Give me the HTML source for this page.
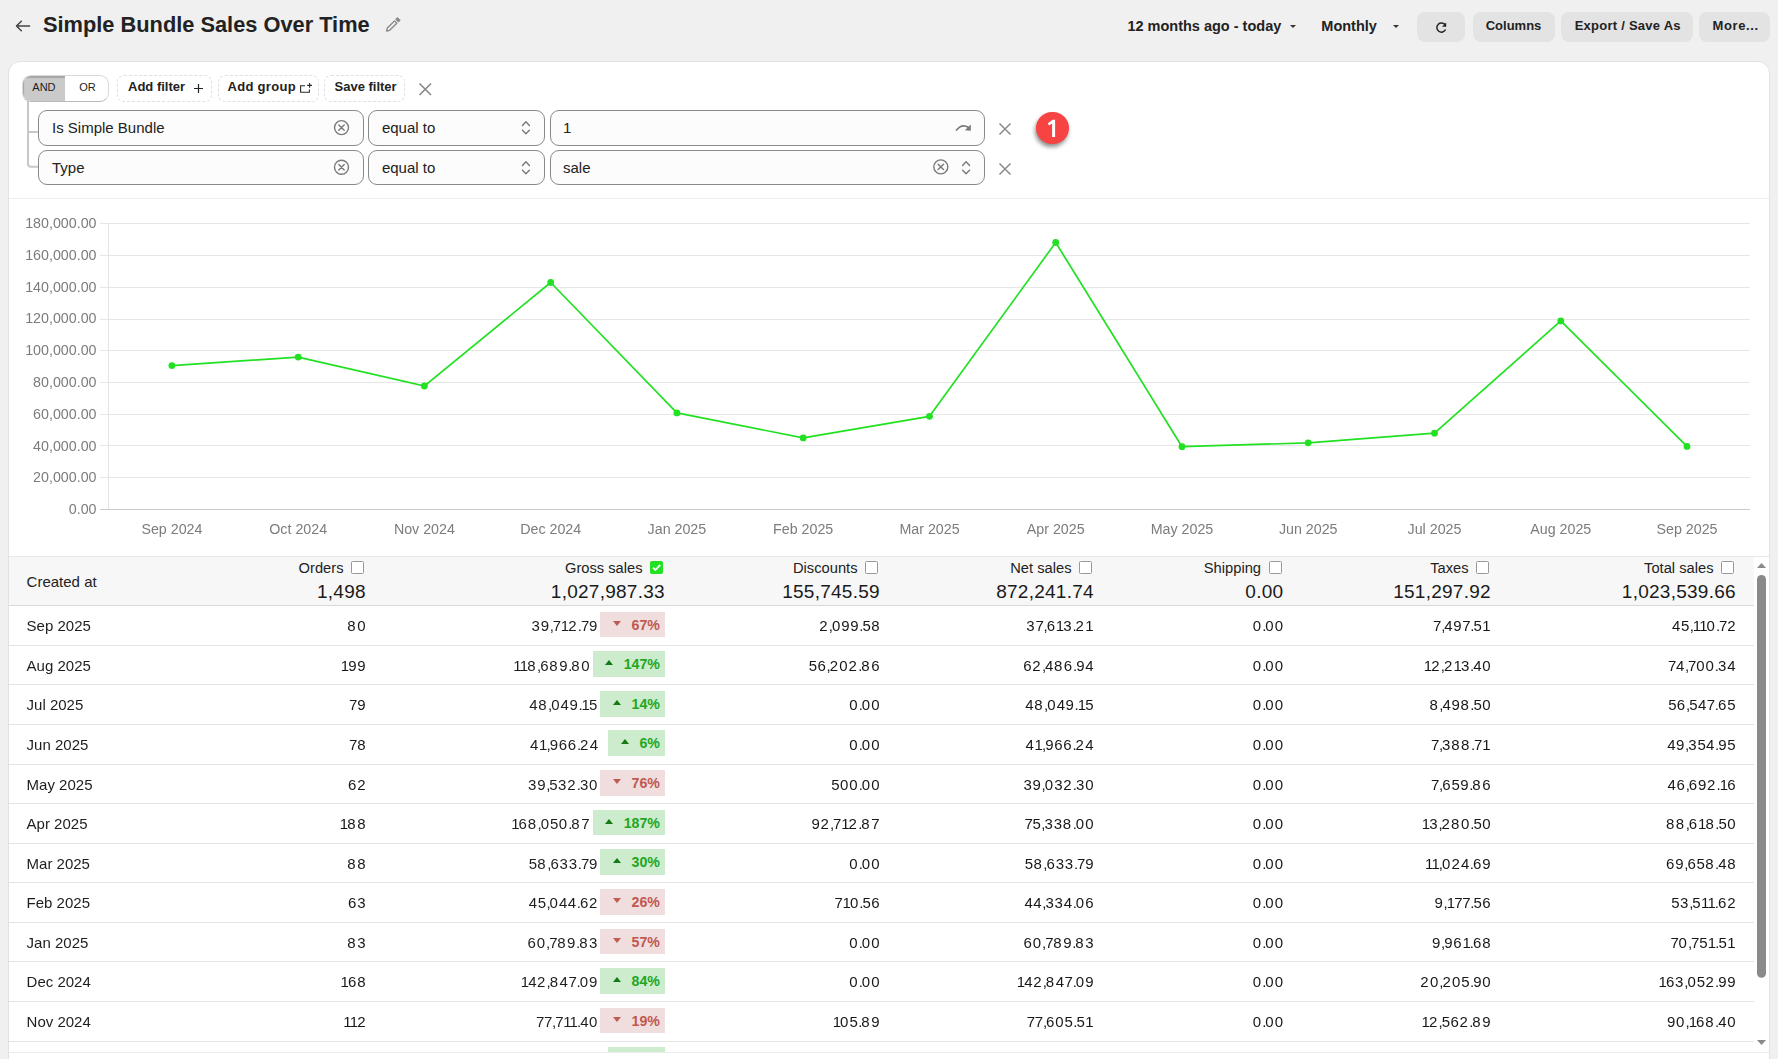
<!DOCTYPE html>
<html><head><meta charset="utf-8">
<style>
*{box-sizing:border-box}
html,body{margin:0;padding:0}
body{width:1778px;height:1059px;overflow:hidden;position:relative;background:#f0f0f0;font-family:"Liberation Sans",sans-serif;color:#1e1e1e}
.a{position:absolute}
.t{position:absolute;white-space:nowrap;line-height:1}
.date{font-size:15px}
.num{font-size:15px;text-align:right;color:#181818}
s{text-decoration:none} s.q0{letter-spacing:1px} s.q1{letter-spacing:-.9px} s.q2{letter-spacing:1.2px} s.q3{letter-spacing:.8px} s.q4{letter-spacing:.55px} s.q5{letter-spacing:.35px} s.q6{letter-spacing:.8px} s.q7{letter-spacing:-.3px} s.q8{letter-spacing:1.5px} s.q9{letter-spacing:.65px} s.qp{letter-spacing:-1px}
.btn{position:absolute;background:#e3e3e3;border-radius:8px;top:12px;height:30px}
.btxt{position:absolute;font-size:13px;font-weight:bold;line-height:13px;top:19.4px;white-space:nowrap;color:#222}
.card{position:absolute;left:8px;top:61px;width:1762px;height:1100px;background:#fff;border:1px solid #e2e2e2;border-radius:12px}
.dash{position:absolute;top:75px;height:27px;border:1px dashed #e0e0e0;border-radius:7px}
.dtxt{position:absolute;font-size:13px;font-weight:bold;line-height:13px;top:80px;white-space:nowrap;color:#222}
.inp{position:absolute;height:35px;border:1px solid #8a8a8a;border-radius:9px;background:#fcfcfc}
.itxt{position:absolute;font-size:15px;line-height:15px;white-space:nowrap;color:#222}
.rowline{position:absolute;left:9px;width:1745px;height:1px;background:#e4e4e4}
.badge{position:absolute;height:25px;font-size:14.2px;font-weight:bold;line-height:26.3px;padding:0 5px 0 31.2px;white-space:nowrap}
.badge i{position:absolute;left:12.8px;top:9px;width:0;height:0;border-left:4.5px solid transparent;border-right:4.5px solid transparent}
.badge.u{background:#cdeccd;color:#22a622}
.badge.u i{border-bottom:5px solid #137a13}
.badge.d{background:#f0dede;color:#c05850}
.badge.d i{border-top:5px solid #c05a55;top:9px}
.gross{position:absolute;right:max(calc(100% + 3px), 67px);font-size:15px;font-weight:normal;line-height:1;white-space:nowrap;text-align:right;color:#1e1e1e}
.hlab{position:absolute;font-size:14.7px;line-height:1;white-space:nowrap;color:#222}
.htot{position:absolute;font-size:19px;letter-spacing:.25px;line-height:1;white-space:nowrap;text-align:right;color:#1a1a1a}
.cb{position:absolute;top:561px;width:13px;height:13px;border:1px solid #999;border-radius:1.5px;background:#fff}
</style></head><body>

<!-- header -->
<svg class="a" style="left:0;top:0" width="60" height="50" viewBox="0 0 60 50">
 <path d="M29.6 26H16.6M21.3 21.3L16.5 26L21.3 30.7" fill="none" stroke="#444" stroke-width="1.5" stroke-linecap="round" stroke-linejoin="round"/>
</svg>
<div class="t" style="left:43px;top:14.45px;font-size:21.8px;font-weight:bold;color:#222">Simple Bundle Sales Over Time</div>
<svg class="a" style="left:380px;top:12px" width="26" height="26" viewBox="380 12 26 26">
 <g transform="translate(386.5 31.2) rotate(-45)">
  <path d="M0.3 0 L2.8 -1.6 H13 V1.6 H2.8 Z" fill="none" stroke="#888" stroke-width="1.4" stroke-linejoin="round"/>
  <rect x="14.6" y="-2.3" width="3.2" height="4.6" fill="#888"/>
 </g>
</svg>

<div class="t" style="left:1127.4px;top:18.93px;font-size:14.5px;font-weight:bold;color:#222">12 months ago - today</div>
<svg class="a" style="left:1288px;top:22px" width="10" height="8"><path d="M2 3H8L5 6Z" fill="#333"/></svg>
<div class="t" style="left:1321.3px;top:18.93px;font-size:14.5px;font-weight:bold;color:#222">Monthly</div>
<svg class="a" style="left:1391px;top:22px" width="10" height="8"><path d="M2 3H8L5 6Z" fill="#333"/></svg>

<div class="btn" style="left:1417px;width:48px"></div>
<svg class="a" style="left:1431px;top:17px" width="20" height="20" viewBox="1431 17 20 20">
 <path d="M1445.3 25.0 A4.6 4.6 0 1 0 1445.6 29.5" fill="none" stroke="#222" stroke-width="1.5"/>
 <path d="M1446.2 22.6 L1446.2 26.8 L1442.0 26.8 Z" fill="#222"/>
</svg>
<div class="btn" style="left:1472.5px;width:82.5px"></div>
<div class="btxt" style="left:1485.7px">Columns</div>
<div class="btn" style="left:1561px;width:132px"></div>
<div class="btxt" style="left:1574.7px;letter-spacing:.25px">Export / Save As</div>
<div class="btn" style="left:1699px;width:71px"></div>
<div class="btxt" style="left:1712.5px;letter-spacing:.6px">More...</div>

<!-- card -->
<div class="card"></div>

<!-- filter toolbar -->
<div class="a" style="left:22px;top:75px;width:86.5px;height:26.5px;border:1px solid #d8d8d8;border-bottom-color:#b9b9b9;border-radius:9px;background:#fff;overflow:hidden">
 <div class="a" style="left:0;top:0;width:42px;height:100%;background:#cacaca;box-shadow:inset 1px 2px 1px rgba(0,0,0,0.18)"></div>
</div>
<div class="t" style="left:32.3px;top:81.89px;font-size:11px;color:#222">AND</div>
<div class="t" style="left:79.3px;top:81.89px;font-size:11px;color:#222">OR</div>

<div class="dash" style="left:117.3px;width:95px"></div>
<div class="dtxt" style="left:128px">Add filter</div>
<svg class="a" style="left:190px;top:80px" width="18" height="18" viewBox="190 80 18 18"><path d="M194 88.5H203M198.5 84V93" stroke="#222" stroke-width="1.2"/></svg>
<div class="dash" style="left:217.5px;width:101.5px"></div>
<div class="dtxt" style="left:227.5px;letter-spacing:.3px">Add group</div>
<svg class="a" style="left:296px;top:80px" width="18" height="16" viewBox="296 80 18 16"><path d="M305 85.8H300.6V92.2H309.4V89.6" fill="none" stroke="#2a2a2a" stroke-width="1.1"/><path d="M307.2 85.4H312M309.6 83V87.8" stroke="#2a2a2a" stroke-width="1.1"/></svg>
<div class="dash" style="left:324.4px;width:80.7px"></div>
<div class="dtxt" style="left:334.5px">Save filter</div>
<svg class="a" style="left:414px;top:78px" width="22" height="22" viewBox="414 78 22 22"><path d="M419.5 83.5L431 95M431 83.5L419.5 95" stroke="#888" stroke-width="1.6"/></svg>

<!-- tree connector -->
<svg class="a" style="left:20px;top:100px" width="24" height="80" viewBox="20 100 24 80">
 <path d="M28 101V163.8Q28 166.8 31 166.8H38.5M28 132H38.5" fill="none" stroke="#c8c8c8" stroke-width="2"/>
</svg>

<!-- filter rows -->
<div class="inp" style="left:38px;top:110px;width:326px;height:36px"></div>
<div class="itxt" style="left:52px;top:120.10px">Is Simple Bundle</div>
<div class="inp" style="left:368px;top:110px;width:177px;height:36px"></div>
<div class="itxt" style="left:381.9px;top:120.10px">equal to</div>
<div class="inp" style="left:550px;top:110px;width:435px;height:36px"></div>
<div class="itxt" style="left:563px;top:120.10px">1</div>

<div class="inp" style="left:38px;top:150px;width:326px"></div>
<div class="itxt" style="left:52px;top:159.90px">Type</div>
<div class="inp" style="left:368px;top:150px;width:177px"></div>
<div class="itxt" style="left:381.9px;top:159.90px">equal to</div>
<div class="inp" style="left:550px;top:150px;width:435px"></div>
<div class="itxt" style="left:563px;top:159.90px">sale</div>

<svg class="a" style="left:0;top:100px" width="1100" height="90" viewBox="0 100 1100 90">
 <g fill="none" stroke="#7a7a7a" stroke-width="1.4" stroke-linecap="round" stroke-linejoin="round">
  <circle cx="341.5" cy="127.6" r="7"/><path d="M338.8 124.9L344.2 130.3M344.2 124.9L338.8 130.3"/>
  <circle cx="341.5" cy="167.2" r="7"/><path d="M338.8 164.5L344.2 169.9M344.2 164.5L338.8 169.9"/>
  <path d="M522.5 125.4L525.9 121.8L529.4 125.4M522.5 130.2L525.9 133.8L529.4 130.2"/>
  <path d="M522.5 165.4L525.9 161.8L529.4 165.4M522.5 170.2L525.9 173.8L529.4 170.2"/>
  <circle cx="940.8" cy="166.9" r="7"/><path d="M938.1 164.2L943.5 169.6M943.5 164.2L938.1 169.6"/>
  <path d="M962.6 165.4L966.1 161.8L969.6 165.4M962.6 170.2L966.1 173.8L969.6 170.2"/>
 </g>
 <path d="M956 130.6 Q962 123 968.5 127.5" fill="none" stroke="#7a7a7a" stroke-width="1.6"/>
 <path d="M970.8 124.6 L970.8 130.8 L964.8 130.2 Z" fill="#7a7a7a"/>
 <path d="M999.5 123.5L1010.5 134.5M1010.5 123.5L999.5 134.5M999.5 163.5L1010.5 174.5M1010.5 163.5L999.5 174.5" stroke="#8a8a8a" stroke-width="1.5"/>
</svg>
<div class="a" style="left:1036.2px;top:111.6px;width:32.8px;height:32.8px;border-radius:50%;background:#f84343;box-shadow:-1px 3px 4px rgba(0,0,0,0.45)"></div>
<svg class="a" style="left:1040px;top:114px" width="26" height="26" viewBox="1040 114 26 26"><path d="M1052.1 136.9H1055.1V119.7H1052.6L1047.9 123.3L1048.9 125.6L1052.1 123.4Z" fill="#fff"/></svg>
<div class="a" style="left:9px;top:198px;width:1760px;height:1px;background:#efefef"></div>

<!-- chart -->
<svg width="1778" height="1059" viewBox="0 0 1778 1059" style="position:absolute;left:0;top:0;will-change:transform">
<g font-family="Liberation Sans" font-size="14.25" fill="#7c7c7c">
<line x1="100" y1="509.5" x2="1750" y2="509.5" stroke="#cccccc" stroke-width="1"/>
<text x="96.5" y="514.1" text-anchor="end">0.00</text>
<line x1="100" y1="477.5" x2="1750" y2="477.5" stroke="#e6e6e6" stroke-width="1"/>
<text x="96.5" y="482.3" text-anchor="end">20,000.00</text>
<line x1="100" y1="445.5" x2="1750" y2="445.5" stroke="#e6e6e6" stroke-width="1"/>
<text x="96.5" y="450.5" text-anchor="end">40,000.00</text>
<line x1="100" y1="414.5" x2="1750" y2="414.5" stroke="#e6e6e6" stroke-width="1"/>
<text x="96.5" y="418.8" text-anchor="end">60,000.00</text>
<line x1="100" y1="382.5" x2="1750" y2="382.5" stroke="#e6e6e6" stroke-width="1"/>
<text x="96.5" y="387.0" text-anchor="end">80,000.00</text>
<line x1="100" y1="350.5" x2="1750" y2="350.5" stroke="#e6e6e6" stroke-width="1"/>
<text x="96.5" y="355.2" text-anchor="end">100,000.00</text>
<line x1="100" y1="319.5" x2="1750" y2="319.5" stroke="#e6e6e6" stroke-width="1"/>
<text x="96.5" y="323.4" text-anchor="end">120,000.00</text>
<line x1="100" y1="287.5" x2="1750" y2="287.5" stroke="#e6e6e6" stroke-width="1"/>
<text x="96.5" y="291.7" text-anchor="end">140,000.00</text>
<line x1="100" y1="255.5" x2="1750" y2="255.5" stroke="#e6e6e6" stroke-width="1"/>
<text x="96.5" y="259.9" text-anchor="end">160,000.00</text>
<line x1="100" y1="223.5" x2="1750" y2="223.5" stroke="#e6e6e6" stroke-width="1"/>
<text x="96.5" y="228.1" text-anchor="end">180,000.00</text>
<line x1="108.5" y1="223" x2="108.5" y2="509" stroke="#e3e3e3" stroke-width="1"/>
<text x="171.9" y="533.8" text-anchor="middle">Sep 2024</text>
<text x="298.2" y="533.8" text-anchor="middle">Oct 2024</text>
<text x="424.4" y="533.8" text-anchor="middle">Nov 2024</text>
<text x="550.7" y="533.8" text-anchor="middle">Dec 2024</text>
<text x="676.9" y="533.8" text-anchor="middle">Jan 2025</text>
<text x="803.2" y="533.8" text-anchor="middle">Feb 2025</text>
<text x="929.5" y="533.8" text-anchor="middle">Mar 2025</text>
<text x="1055.7" y="533.8" text-anchor="middle">Apr 2025</text>
<text x="1182.0" y="533.8" text-anchor="middle">May 2025</text>
<text x="1308.2" y="533.8" text-anchor="middle">Jun 2025</text>
<text x="1434.5" y="533.8" text-anchor="middle">Jul 2025</text>
<text x="1560.8" y="533.8" text-anchor="middle">Aug 2025</text>
<text x="1687.0" y="533.8" text-anchor="middle">Sep 2025</text>
</g>
<polyline fill="none" stroke="#22e022" stroke-width="1.7" stroke-linejoin="round" points="171.9,365.6 298.2,357.1 424.4,386.0 550.7,282.5 676.9,412.9 803.2,437.9 929.5,416.3 1055.7,242.5 1182.0,446.7 1308.2,442.8 1434.5,433.2 1560.8,320.9 1687.0,446.4"/>
<circle cx="171.9" cy="365.6" r="3.4" fill="#22e022"/>
<circle cx="298.2" cy="357.1" r="3.4" fill="#22e022"/>
<circle cx="424.4" cy="386.0" r="3.4" fill="#22e022"/>
<circle cx="550.7" cy="282.5" r="3.4" fill="#22e022"/>
<circle cx="676.9" cy="412.9" r="3.4" fill="#22e022"/>
<circle cx="803.2" cy="437.9" r="3.4" fill="#22e022"/>
<circle cx="929.5" cy="416.3" r="3.4" fill="#22e022"/>
<circle cx="1055.7" cy="242.5" r="3.4" fill="#22e022"/>
<circle cx="1182.0" cy="446.7" r="3.4" fill="#22e022"/>
<circle cx="1308.2" cy="442.8" r="3.4" fill="#22e022"/>
<circle cx="1434.5" cy="433.2" r="3.4" fill="#22e022"/>
<circle cx="1560.8" cy="320.9" r="3.4" fill="#22e022"/>
<circle cx="1687.0" cy="446.4" r="3.4" fill="#22e022"/>
</svg>

<!-- table -->
<div class="a" style="left:9px;top:556px;width:1760px;height:1px;background:#e8e8e8"></div>
<div class="a" style="left:9px;top:557px;width:1745px;height:48.5px;background:#f7f7f7"></div>
<div class="a" style="left:9px;top:605px;width:1745px;height:1px;background:#d9d9d9"></div>
<div class="hlab" style="left:26.6px;top:574.00px;font-size:15px">Created at</div>
<div class="cb" style="left:351.0px"></div>
<div class="hlab" style="right:1434.5px;top:560.56px">Orders</div>
<div class="htot" style="right:1412.2px;top:581.62px">1,498</div>
<div class="cb" style="left:650.0px;background:#22e022;border-color:#22e022"></div>
<svg class="a" style="left:650.0px;top:561px" width="13" height="13" viewBox="0 0 13 13"><path d="M3 6.6L5.4 9L10.2 3.8" fill="none" stroke="#fff" stroke-width="1.8"/></svg>
<div class="hlab" style="right:1135.5px;top:560.56px">Gross sales</div>
<div class="htot" style="right:1113.2px;top:581.62px">1,027,987.33</div>
<div class="cb" style="left:865.0px"></div>
<div class="hlab" style="right:920.5px;top:560.56px">Discounts</div>
<div class="htot" style="right:898.2px;top:581.62px">155,745.59</div>
<div class="cb" style="left:1079.0px"></div>
<div class="hlab" style="right:706.5px;top:560.56px">Net sales</div>
<div class="htot" style="right:684.2px;top:581.62px">872,241.74</div>
<div class="cb" style="left:1268.5px"></div>
<div class="hlab" style="right:517.0px;top:560.56px">Shipping</div>
<div class="htot" style="right:494.7px;top:581.62px">0.00</div>
<div class="cb" style="left:1476.0px"></div>
<div class="hlab" style="right:309.5px;top:560.56px">Taxes</div>
<div class="htot" style="right:287.2px;top:581.62px">151,297.92</div>
<div class="cb" style="left:1721.0px"></div>
<div class="hlab" style="right:64.5px;top:560.56px">Total sales</div>
<div class="htot" style="right:42.2px;top:581.62px">1,023,539.66</div>
<div class="a" style="left:0;top:0;width:1778px;height:1052px;overflow:hidden">
<div class="rowline" style="top:645px"></div>
<div class="t date" style="left:26.6px;top:618.30px">Sep 2025</div>
<div class="t num" style="right:1412.5px;top:618.30px"><s class="q8">8</s>0</div>
<div class="badge d" style="right:1113px;top:612px;height:25px"><i></i>67%<span class="gross" style="top:6.30px"><s class="q3">3</s><s class="q9">9</s><s class="qp">,</s><s class="q7">7</s><s class="q1">1</s><s class="q2">2</s><s class="qp">.</s><s class="q7">7</s>9</span></div>
<div class="t num" style="right:898.5px;top:618.30px"><s class="q2">2</s><s class="qp">,</s><s class="q0">0</s><s class="q9">9</s><s class="q9">9</s><s class="qp">.</s><s class="q5">5</s>8</div>
<div class="t num" style="right:684.5px;top:618.30px"><s class="q3">3</s><s class="q7">7</s><s class="qp">,</s><s class="q6">6</s><s class="q1">1</s><s class="q3">3</s><s class="qp">.</s><s class="q2">2</s>1</div>
<div class="t num" style="right:495px;top:618.30px"><s class="q0">0</s><s class="qp">.</s><s class="q0">0</s>0</div>
<div class="t num" style="right:287.5px;top:618.30px"><s class="q7">7</s><s class="qp">,</s><s class="q4">4</s><s class="q9">9</s><s class="q7">7</s><s class="qp">.</s><s class="q5">5</s>1</div>
<div class="t num" style="right:42.5px;top:618.30px"><s class="q4">4</s><s class="q5">5</s><s class="qp">,</s><s class="q1">1</s><s class="q1">1</s><s class="q0">0</s><s class="qp">.</s><s class="q7">7</s>2</div>
<div class="rowline" style="top:684px"></div>
<div class="t date" style="left:26.6px;top:658.30px">Aug 2025</div>
<div class="t num" style="right:1412.5px;top:658.30px"><s class="q1">1</s><s class="q9">9</s>9</div>
<div class="badge u" style="right:1113px;top:651px;height:26px"><i></i>147%<span class="gross" style="top:7.30px"><s class="q1">1</s><s class="q1">1</s><s class="q8">8</s><s class="qp">,</s><s class="q6">6</s><s class="q8">8</s><s class="q9">9</s><s class="qp">.</s><s class="q8">8</s>0</span></div>
<div class="t num" style="right:898.5px;top:658.30px"><s class="q5">5</s><s class="q6">6</s><s class="qp">,</s><s class="q2">2</s><s class="q0">0</s><s class="q2">2</s><s class="qp">.</s><s class="q8">8</s>6</div>
<div class="t num" style="right:684.5px;top:658.30px"><s class="q6">6</s><s class="q2">2</s><s class="qp">,</s><s class="q4">4</s><s class="q8">8</s><s class="q6">6</s><s class="qp">.</s><s class="q9">9</s>4</div>
<div class="t num" style="right:495px;top:658.30px"><s class="q0">0</s><s class="qp">.</s><s class="q0">0</s>0</div>
<div class="t num" style="right:287.5px;top:658.30px"><s class="q1">1</s><s class="q2">2</s><s class="qp">,</s><s class="q2">2</s><s class="q1">1</s><s class="q3">3</s><s class="qp">.</s><s class="q4">4</s>0</div>
<div class="t num" style="right:42.5px;top:658.30px"><s class="q7">7</s><s class="q4">4</s><s class="qp">,</s><s class="q7">7</s><s class="q0">0</s><s class="q0">0</s><s class="qp">.</s><s class="q3">3</s>4</div>
<div class="rowline" style="top:724px"></div>
<div class="t date" style="left:26.6px;top:697.30px">Jul 2025</div>
<div class="t num" style="right:1412.5px;top:697.30px"><s class="q7">7</s>9</div>
<div class="badge u" style="right:1113px;top:691px;height:26px"><i></i>14%<span class="gross" style="top:6.30px"><s class="q4">4</s><s class="q8">8</s><s class="qp">,</s><s class="q0">0</s><s class="q4">4</s><s class="q9">9</s><s class="qp">.</s><s class="q1">1</s>5</span></div>
<div class="t num" style="right:898.5px;top:697.30px"><s class="q0">0</s><s class="qp">.</s><s class="q0">0</s>0</div>
<div class="t num" style="right:684.5px;top:697.30px"><s class="q4">4</s><s class="q8">8</s><s class="qp">,</s><s class="q0">0</s><s class="q4">4</s><s class="q9">9</s><s class="qp">.</s><s class="q1">1</s>5</div>
<div class="t num" style="right:495px;top:697.30px"><s class="q0">0</s><s class="qp">.</s><s class="q0">0</s>0</div>
<div class="t num" style="right:287.5px;top:697.30px"><s class="q8">8</s><s class="qp">,</s><s class="q4">4</s><s class="q9">9</s><s class="q8">8</s><s class="qp">.</s><s class="q5">5</s>0</div>
<div class="t num" style="right:42.5px;top:697.30px"><s class="q5">5</s><s class="q6">6</s><s class="qp">,</s><s class="q5">5</s><s class="q4">4</s><s class="q7">7</s><s class="qp">.</s><s class="q6">6</s>5</div>
<div class="rowline" style="top:764px"></div>
<div class="t date" style="left:26.6px;top:737.30px">Jun 2025</div>
<div class="t num" style="right:1412.5px;top:737.30px"><s class="q7">7</s>8</div>
<div class="badge u" style="right:1113px;top:730px;height:26px"><i></i>6%<span class="gross" style="top:7.30px"><s class="q4">4</s><s class="q1">1</s><s class="qp">,</s><s class="q9">9</s><s class="q6">6</s><s class="q6">6</s><s class="qp">.</s><s class="q2">2</s>4</span></div>
<div class="t num" style="right:898.5px;top:737.30px"><s class="q0">0</s><s class="qp">.</s><s class="q0">0</s>0</div>
<div class="t num" style="right:684.5px;top:737.30px"><s class="q4">4</s><s class="q1">1</s><s class="qp">,</s><s class="q9">9</s><s class="q6">6</s><s class="q6">6</s><s class="qp">.</s><s class="q2">2</s>4</div>
<div class="t num" style="right:495px;top:737.30px"><s class="q0">0</s><s class="qp">.</s><s class="q0">0</s>0</div>
<div class="t num" style="right:287.5px;top:737.30px"><s class="q7">7</s><s class="qp">,</s><s class="q3">3</s><s class="q8">8</s><s class="q8">8</s><s class="qp">.</s><s class="q7">7</s>1</div>
<div class="t num" style="right:42.5px;top:737.30px"><s class="q4">4</s><s class="q9">9</s><s class="qp">,</s><s class="q3">3</s><s class="q5">5</s><s class="q4">4</s><s class="qp">.</s><s class="q9">9</s>5</div>
<div class="rowline" style="top:803px"></div>
<div class="t date" style="left:26.6px;top:777.30px">May 2025</div>
<div class="t num" style="right:1412.5px;top:777.30px"><s class="q6">6</s>2</div>
<div class="badge d" style="right:1113px;top:770px;height:26px"><i></i>76%<span class="gross" style="top:7.30px"><s class="q3">3</s><s class="q9">9</s><s class="qp">,</s><s class="q5">5</s><s class="q3">3</s><s class="q2">2</s><s class="qp">.</s><s class="q3">3</s>0</span></div>
<div class="t num" style="right:898.5px;top:777.30px"><s class="q5">5</s><s class="q0">0</s><s class="q0">0</s><s class="qp">.</s><s class="q0">0</s>0</div>
<div class="t num" style="right:684.5px;top:777.30px"><s class="q3">3</s><s class="q9">9</s><s class="qp">,</s><s class="q0">0</s><s class="q3">3</s><s class="q2">2</s><s class="qp">.</s><s class="q3">3</s>0</div>
<div class="t num" style="right:495px;top:777.30px"><s class="q0">0</s><s class="qp">.</s><s class="q0">0</s>0</div>
<div class="t num" style="right:287.5px;top:777.30px"><s class="q7">7</s><s class="qp">,</s><s class="q6">6</s><s class="q5">5</s><s class="q9">9</s><s class="qp">.</s><s class="q8">8</s>6</div>
<div class="t num" style="right:42.5px;top:777.30px"><s class="q4">4</s><s class="q6">6</s><s class="qp">,</s><s class="q6">6</s><s class="q9">9</s><s class="q2">2</s><s class="qp">.</s><s class="q1">1</s>6</div>
<div class="rowline" style="top:843px"></div>
<div class="t date" style="left:26.6px;top:816.30px">Apr 2025</div>
<div class="t num" style="right:1412.5px;top:816.30px"><s class="q1">1</s><s class="q8">8</s>8</div>
<div class="badge u" style="right:1113px;top:810px;height:25px"><i></i>187%<span class="gross" style="top:6.30px"><s class="q1">1</s><s class="q6">6</s><s class="q8">8</s><s class="qp">,</s><s class="q0">0</s><s class="q5">5</s><s class="q0">0</s><s class="qp">.</s><s class="q8">8</s>7</span></div>
<div class="t num" style="right:898.5px;top:816.30px"><s class="q9">9</s><s class="q2">2</s><s class="qp">,</s><s class="q7">7</s><s class="q1">1</s><s class="q2">2</s><s class="qp">.</s><s class="q8">8</s>7</div>
<div class="t num" style="right:684.5px;top:816.30px"><s class="q7">7</s><s class="q5">5</s><s class="qp">,</s><s class="q3">3</s><s class="q3">3</s><s class="q8">8</s><s class="qp">.</s><s class="q0">0</s>0</div>
<div class="t num" style="right:495px;top:816.30px"><s class="q0">0</s><s class="qp">.</s><s class="q0">0</s>0</div>
<div class="t num" style="right:287.5px;top:816.30px"><s class="q1">1</s><s class="q3">3</s><s class="qp">,</s><s class="q2">2</s><s class="q8">8</s><s class="q0">0</s><s class="qp">.</s><s class="q5">5</s>0</div>
<div class="t num" style="right:42.5px;top:816.30px"><s class="q8">8</s><s class="q8">8</s><s class="qp">,</s><s class="q6">6</s><s class="q1">1</s><s class="q8">8</s><s class="qp">.</s><s class="q5">5</s>0</div>
<div class="rowline" style="top:882px"></div>
<div class="t date" style="left:26.6px;top:856.30px">Mar 2025</div>
<div class="t num" style="right:1412.5px;top:856.30px"><s class="q8">8</s>8</div>
<div class="badge u" style="right:1113px;top:849px;height:26px"><i></i>30%<span class="gross" style="top:7.30px"><s class="q5">5</s><s class="q8">8</s><s class="qp">,</s><s class="q6">6</s><s class="q3">3</s><s class="q3">3</s><s class="qp">.</s><s class="q7">7</s>9</span></div>
<div class="t num" style="right:898.5px;top:856.30px"><s class="q0">0</s><s class="qp">.</s><s class="q0">0</s>0</div>
<div class="t num" style="right:684.5px;top:856.30px"><s class="q5">5</s><s class="q8">8</s><s class="qp">,</s><s class="q6">6</s><s class="q3">3</s><s class="q3">3</s><s class="qp">.</s><s class="q7">7</s>9</div>
<div class="t num" style="right:495px;top:856.30px"><s class="q0">0</s><s class="qp">.</s><s class="q0">0</s>0</div>
<div class="t num" style="right:287.5px;top:856.30px"><s class="q1">1</s><s class="q1">1</s><s class="qp">,</s><s class="q0">0</s><s class="q2">2</s><s class="q4">4</s><s class="qp">.</s><s class="q6">6</s>9</div>
<div class="t num" style="right:42.5px;top:856.30px"><s class="q6">6</s><s class="q9">9</s><s class="qp">,</s><s class="q6">6</s><s class="q5">5</s><s class="q8">8</s><s class="qp">.</s><s class="q4">4</s>8</div>
<div class="rowline" style="top:922px"></div>
<div class="t date" style="left:26.6px;top:895.30px">Feb 2025</div>
<div class="t num" style="right:1412.5px;top:895.30px"><s class="q6">6</s>3</div>
<div class="badge d" style="right:1113px;top:889px;height:26px"><i></i>26%<span class="gross" style="top:6.30px"><s class="q4">4</s><s class="q5">5</s><s class="qp">,</s><s class="q0">0</s><s class="q4">4</s><s class="q4">4</s><s class="qp">.</s><s class="q6">6</s>2</span></div>
<div class="t num" style="right:898.5px;top:895.30px"><s class="q7">7</s><s class="q1">1</s><s class="q0">0</s><s class="qp">.</s><s class="q5">5</s>6</div>
<div class="t num" style="right:684.5px;top:895.30px"><s class="q4">4</s><s class="q4">4</s><s class="qp">,</s><s class="q3">3</s><s class="q3">3</s><s class="q4">4</s><s class="qp">.</s><s class="q0">0</s>6</div>
<div class="t num" style="right:495px;top:895.30px"><s class="q0">0</s><s class="qp">.</s><s class="q0">0</s>0</div>
<div class="t num" style="right:287.5px;top:895.30px"><s class="q9">9</s><s class="qp">,</s><s class="q1">1</s><s class="q7">7</s><s class="q7">7</s><s class="qp">.</s><s class="q5">5</s>6</div>
<div class="t num" style="right:42.5px;top:895.30px"><s class="q5">5</s><s class="q3">3</s><s class="qp">,</s><s class="q5">5</s><s class="q1">1</s><s class="q1">1</s><s class="qp">.</s><s class="q6">6</s>2</div>
<div class="rowline" style="top:961px"></div>
<div class="t date" style="left:26.6px;top:935.30px">Jan 2025</div>
<div class="t num" style="right:1412.5px;top:935.30px"><s class="q8">8</s>3</div>
<div class="badge d" style="right:1113px;top:929px;height:25px"><i></i>57%<span class="gross" style="top:6.30px"><s class="q6">6</s><s class="q0">0</s><s class="qp">,</s><s class="q7">7</s><s class="q8">8</s><s class="q9">9</s><s class="qp">.</s><s class="q8">8</s>3</span></div>
<div class="t num" style="right:898.5px;top:935.30px"><s class="q0">0</s><s class="qp">.</s><s class="q0">0</s>0</div>
<div class="t num" style="right:684.5px;top:935.30px"><s class="q6">6</s><s class="q0">0</s><s class="qp">,</s><s class="q7">7</s><s class="q8">8</s><s class="q9">9</s><s class="qp">.</s><s class="q8">8</s>3</div>
<div class="t num" style="right:495px;top:935.30px"><s class="q0">0</s><s class="qp">.</s><s class="q0">0</s>0</div>
<div class="t num" style="right:287.5px;top:935.30px"><s class="q9">9</s><s class="qp">,</s><s class="q9">9</s><s class="q6">6</s><s class="q1">1</s><s class="qp">.</s><s class="q6">6</s>8</div>
<div class="t num" style="right:42.5px;top:935.30px"><s class="q7">7</s><s class="q0">0</s><s class="qp">,</s><s class="q7">7</s><s class="q5">5</s><s class="q1">1</s><s class="qp">.</s><s class="q5">5</s>1</div>
<div class="rowline" style="top:1001px"></div>
<div class="t date" style="left:26.6px;top:974.30px">Dec 2024</div>
<div class="t num" style="right:1412.5px;top:974.30px"><s class="q1">1</s><s class="q6">6</s>8</div>
<div class="badge u" style="right:1113px;top:968px;height:26px"><i></i>84%<span class="gross" style="top:6.30px"><s class="q1">1</s><s class="q4">4</s><s class="q2">2</s><s class="qp">,</s><s class="q8">8</s><s class="q4">4</s><s class="q7">7</s><s class="qp">.</s><s class="q0">0</s>9</span></div>
<div class="t num" style="right:898.5px;top:974.30px"><s class="q0">0</s><s class="qp">.</s><s class="q0">0</s>0</div>
<div class="t num" style="right:684.5px;top:974.30px"><s class="q1">1</s><s class="q4">4</s><s class="q2">2</s><s class="qp">,</s><s class="q8">8</s><s class="q4">4</s><s class="q7">7</s><s class="qp">.</s><s class="q0">0</s>9</div>
<div class="t num" style="right:495px;top:974.30px"><s class="q0">0</s><s class="qp">.</s><s class="q0">0</s>0</div>
<div class="t num" style="right:287.5px;top:974.30px"><s class="q2">2</s><s class="q0">0</s><s class="qp">,</s><s class="q2">2</s><s class="q0">0</s><s class="q5">5</s><s class="qp">.</s><s class="q9">9</s>0</div>
<div class="t num" style="right:42.5px;top:974.30px"><s class="q1">1</s><s class="q6">6</s><s class="q3">3</s><s class="qp">,</s><s class="q0">0</s><s class="q5">5</s><s class="q2">2</s><s class="qp">.</s><s class="q9">9</s>9</div>
<div class="rowline" style="top:1041px"></div>
<div class="t date" style="left:26.6px;top:1014.30px">Nov 2024</div>
<div class="t num" style="right:1412.5px;top:1014.30px"><s class="q1">1</s><s class="q1">1</s>2</div>
<div class="badge d" style="right:1113px;top:1008px;height:25px"><i></i>19%<span class="gross" style="top:6.30px"><s class="q7">7</s><s class="q7">7</s><s class="qp">,</s><s class="q7">7</s><s class="q1">1</s><s class="q1">1</s><s class="qp">.</s><s class="q4">4</s>0</span></div>
<div class="t num" style="right:898.5px;top:1014.30px"><s class="q1">1</s><s class="q0">0</s><s class="q5">5</s><s class="qp">.</s><s class="q8">8</s>9</div>
<div class="t num" style="right:684.5px;top:1014.30px"><s class="q7">7</s><s class="q7">7</s><s class="qp">,</s><s class="q6">6</s><s class="q0">0</s><s class="q5">5</s><s class="qp">.</s><s class="q5">5</s>1</div>
<div class="t num" style="right:495px;top:1014.30px"><s class="q0">0</s><s class="qp">.</s><s class="q0">0</s>0</div>
<div class="t num" style="right:287.5px;top:1014.30px"><s class="q1">1</s><s class="q2">2</s><s class="qp">,</s><s class="q5">5</s><s class="q6">6</s><s class="q2">2</s><s class="qp">.</s><s class="q8">8</s>9</div>
<div class="t num" style="right:42.5px;top:1014.30px"><s class="q9">9</s><s class="q0">0</s><s class="qp">,</s><s class="q1">1</s><s class="q6">6</s><s class="q8">8</s><s class="qp">.</s><s class="q4">4</s>0</div>
<div class="rowline" style="top:1081px"></div>
<div class="t date" style="left:26.6px;top:1054.30px">Oct 2024</div>
<div class="t num" style="right:1412.5px;top:1054.30px"><s class="q9">9</s>6</div>
<div class="badge u" style="right:1113px;top:1047px;height:26px"><i></i>6%<span class="gross" style="top:7.30px"><s class="q9">9</s><s class="q5">5</s><s class="qp">,</s><s class="q9">9</s><s class="q4">4</s><s class="q0">0</s><s class="qp">.</s><s class="q2">2</s>1</span></div>
<div class="t num" style="right:898.5px;top:1054.30px"><s class="q0">0</s><s class="qp">.</s><s class="q0">0</s>0</div>
<div class="t num" style="right:684.5px;top:1054.30px"><s class="q9">9</s><s class="q5">5</s><s class="qp">,</s><s class="q9">9</s><s class="q4">4</s><s class="q0">0</s><s class="qp">.</s><s class="q2">2</s>1</div>
<div class="t num" style="right:495px;top:1054.30px"><s class="q0">0</s><s class="qp">.</s><s class="q0">0</s>0</div>
<div class="t num" style="right:287.5px;top:1054.30px"><s class="q1">1</s><s class="q6">6</s><s class="qp">,</s><s class="q0">0</s><s class="q0">0</s><s class="q2">2</s><s class="qp">.</s><s class="q1">1</s>3</div>
<div class="t num" style="right:42.5px;top:1054.30px"><s class="q1">1</s><s class="q1">1</s><s class="q1">1</s><s class="qp">,</s><s class="q9">9</s><s class="q4">4</s><s class="q2">2</s><s class="qp">.</s><s class="q3">3</s>4</div>
</div>
<div class="a" style="left:9px;top:1052px;width:1760px;height:1px;background:#ececec"></div>
<div class="a" style="left:9px;top:1053px;width:1760px;height:10px;background:#fff"></div>
<!-- scrollbar -->
<svg class="a" style="left:1754px;top:557px" width="15" height="495" viewBox="1754 557 15 495">
 <path d="M1757 568H1766L1761.5 563Z" fill="#8a8a8a"/>
 <rect x="1757" y="575" width="9" height="402.7" rx="4.5" fill="#8a8a8a"/>
 <path d="M1757 1040H1766L1761.5 1045Z" fill="#8a8a8a"/>
</svg>
</body></html>
